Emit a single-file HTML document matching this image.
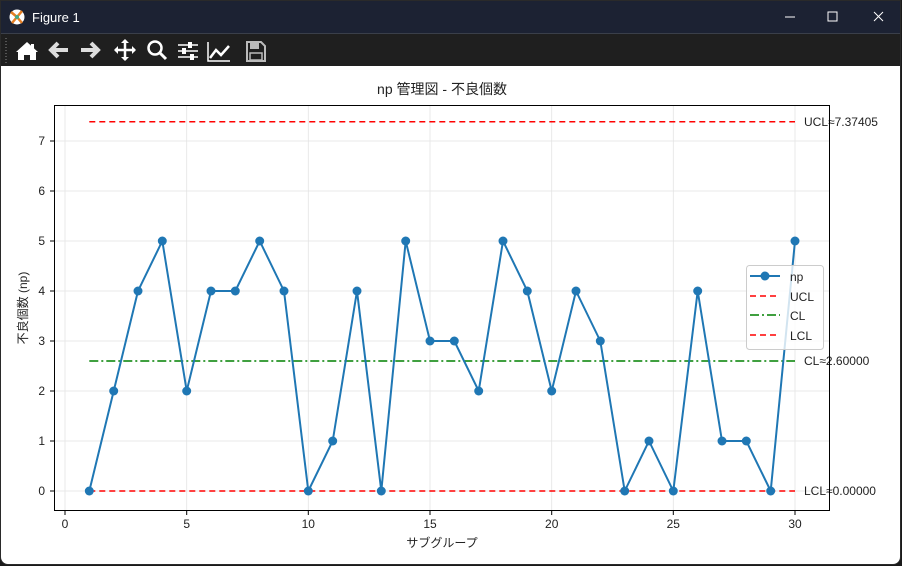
<!DOCTYPE html>
<html><head><meta charset="utf-8"><style>
body{margin:0;width:902px;height:566px;background:#1a1a1a;overflow:hidden;font-family:"Liberation Sans","Noto Sans CJK JP",sans-serif}
.win{position:absolute;left:0;top:0;width:901px;height:565px;background:#fff;border-radius:0 0 8px 8px;overflow:hidden;border:1px solid #2a2a2a;box-sizing:border-box}
.tb{position:absolute;left:0;top:0;width:100%;height:32px;background:#1c2233;color:#fff;font-size:13px}
.tool{position:absolute;left:0;top:32px;width:100%;height:32px;background:#1f1f1f;border-top:1px solid #3a3f4a}
svg text{font-family:"Liberation Sans","Noto Sans CJK JP",sans-serif}
</style></head><body><div class="win">
<div class="tb">
<svg width="902" height="32" style="position:absolute;left:0;top:0">
<circle cx="16" cy="16" r="7.5" fill="#fff"/><path d="M16 16 L10 11 M16 16 L21 10 M16 16 L21 22 M16 16 L11 22" stroke="#e67e22" stroke-width="2.5"/><circle cx="16" cy="16" r="2" fill="#4a8"/>
<text x="31" y="21" fill="#fff" font-size="13">Figure 1</text>
<path d="M784 16h10" stroke="#fff"/><rect x="827" y="11" width="9" height="9" fill="none" stroke="#fff"/>
<path d="M873 11l9 9M882 11l-9 9" stroke="#fff"/>
</svg></div>
<div class="tool">
<svg width="300" height="32" style="position:absolute;left:0;top:0" fill="#fff" stroke="#fff">
<path d="M5 4v25" stroke="#888" stroke-dasharray="1 2"/>
<path d="M17 26v-8h-2l11-10 11 10h-2v8h-6v-5h-6v5z" stroke="none"/><rect x="30" y="10" width="3" height="5" stroke="none"/>
<path d="M67 16H51M57 9l-7 7 7 7" fill="none" stroke="#ddd" stroke-width="4"/>
<path d="M80 16h16M90 9l7 7-7 7" fill="none" stroke="#ddd" stroke-width="4"/>
<path d="M124 6v20M114 16h20" stroke-width="2.5"/><path d="M124 5l-4 4h8zM124 27l-4-4h8zM113 16l4-4v8zM135 16l-4-4v8z" stroke="none"/>
<circle cx="154" cy="14" r="6.5" fill="none" stroke-width="2.5"/><path d="M159 19l6 6" stroke-width="3"/>
<path d="M177 11h20M177 17h20M177 23h20" stroke-width="1.5"/><rect x="187" y="8" width="4" height="6" stroke="none"/><rect x="181" y="14" width="4" height="6" stroke="none"/><rect x="189" y="20" width="4" height="6" stroke="none"/>
<path d="M207 8v19h22" fill="none" stroke-width="1.5"/><path d="M209 24l6-8 5 5 8-9" fill="none" stroke-width="2.5"/>
<path d="M246 8h14l4 4v15h-18z" fill="none" stroke="#bbb" stroke-width="2"/><rect x="249" y="9" width="9" height="6" fill="#bbb" stroke="none"/><rect x="249" y="19" width="12" height="7" fill="none" stroke="#bbb" stroke-width="1.5"/>
</svg></div>
<svg width="902" height="566" style="position:absolute;left:-1px;top:0" font-size="12">
<text x="442" y="93" text-anchor="middle" font-size="14" fill="#222">np 管理図 - 不良個数</text>
<g stroke="#e3e3e3" stroke-width="0.8">
<path d="M65 104v406M186.7 104v406M308.3 104v406M430 104v406M551.7 104v406M673.3 104v406M795 104v406"/>
<path d="M54 490h776M54 440h776M54 390h776M54 340h776M54 290h776M54 240h776M54 190h776M54 140h776"/>
</g>
<path d="M89.3 120.7H795" stroke="#f00" stroke-width="1.5" stroke-dasharray="6 4"/>
<path d="M89.3 490H795" stroke="#f00" stroke-width="1.5" stroke-dasharray="6 4"/>
<path d="M89.3 360H795" stroke="#008000" stroke-width="1.5" stroke-dasharray="9 3 2 3"/>
<polyline fill="none" stroke="#1f77b4" stroke-width="2" points="89.3,490 113.7,390 138,290 162.3,240 186.7,390 211,290 235.3,290 259.7,240 284,290 308.3,490 332.7,440 357,290 381.3,490 405.7,240 430,340 454.3,340 478.7,390 503,240 527.3,290 551.7,390 576,290 600.3,340 624.7,490 649,440 673.3,490 697.7,290 722,440 746.3,440 770.7,490 795,240"/>
<g fill="#1f77b4">
<circle cx="89.3" cy="490" r="4.5"/><circle cx="113.7" cy="390" r="4.5"/><circle cx="138" cy="290" r="4.5"/><circle cx="162.3" cy="240" r="4.5"/><circle cx="186.7" cy="390" r="4.5"/><circle cx="211" cy="290" r="4.5"/><circle cx="235.3" cy="290" r="4.5"/><circle cx="259.7" cy="240" r="4.5"/><circle cx="284" cy="290" r="4.5"/><circle cx="308.3" cy="490" r="4.5"/><circle cx="332.7" cy="440" r="4.5"/><circle cx="357" cy="290" r="4.5"/><circle cx="381.3" cy="490" r="4.5"/><circle cx="405.7" cy="240" r="4.5"/><circle cx="430" cy="340" r="4.5"/><circle cx="454.3" cy="340" r="4.5"/><circle cx="478.7" cy="390" r="4.5"/><circle cx="503" cy="240" r="4.5"/><circle cx="527.3" cy="290" r="4.5"/><circle cx="551.7" cy="390" r="4.5"/><circle cx="576" cy="290" r="4.5"/><circle cx="600.3" cy="340" r="4.5"/><circle cx="624.7" cy="490" r="4.5"/><circle cx="649" cy="440" r="4.5"/><circle cx="673.3" cy="490" r="4.5"/><circle cx="697.7" cy="290" r="4.5"/><circle cx="722" cy="440" r="4.5"/><circle cx="746.3" cy="440" r="4.5"/><circle cx="770.7" cy="490" r="4.5"/><circle cx="795" cy="240" r="4.5"/>
</g>
<text x="804" y="125" fill="#222">UCL≈7.37405</text>
<text x="804" y="364" fill="#222">CL≈2.60000</text>
<text x="804" y="494" fill="#222">LCL≈0.00000</text>
<rect x="746.5" y="264.5" width="77" height="84" rx="3" fill="#fff" fill-opacity="0.8" stroke="#ccc"/>
<path d="M750 275h30" stroke="#1f77b4" stroke-width="2"/><circle cx="765" cy="275" r="4.5" fill="#1f77b4"/>
<path d="M750 295h30" stroke="#f00" stroke-width="1.5" stroke-dasharray="6 4"/>
<path d="M750 314h30" stroke="#008000" stroke-width="1.5" stroke-dasharray="9 3 2 3"/>
<path d="M750 334h30" stroke="#f00" stroke-width="1.5" stroke-dasharray="6 4"/>
<text x="790" y="280" fill="#222">np</text><text x="790" y="300" fill="#222">UCL</text><text x="790" y="319" fill="#222">CL</text><text x="790" y="339" fill="#222">LCL</text>
<rect x="54.5" y="104.5" width="775" height="405" fill="none" stroke="#000" stroke-width="1"/>
<g stroke="#000"><path d="M65 510v4M186.7 510v4M308.3 510v4M430 510v4M551.7 510v4M673.3 510v4M795 510v4"/>
<path d="M50 490h4M50 440h4M50 390h4M50 340h4M50 290h4M50 240h4M50 190h4M50 140h4"/></g>
<g fill="#222" text-anchor="middle"><text x="65" y="527">0</text><text x="186.7" y="527">5</text><text x="308.3" y="527">10</text><text x="430" y="527">15</text><text x="551.7" y="527">20</text><text x="673.3" y="527">25</text><text x="795" y="527">30</text></g>
<g fill="#222" text-anchor="end"><text x="45" y="494">0</text><text x="45" y="444">1</text><text x="45" y="394">2</text><text x="45" y="344">3</text><text x="45" y="294">4</text><text x="45" y="244">5</text><text x="45" y="194">6</text><text x="45" y="144">7</text></g>
<text x="442" y="546" text-anchor="middle" fill="#222">サブグループ</text>
<text transform="translate(27 307) rotate(-90)" text-anchor="middle" fill="#222">不良個数 (np)</text>
</svg>
</div></body></html>
